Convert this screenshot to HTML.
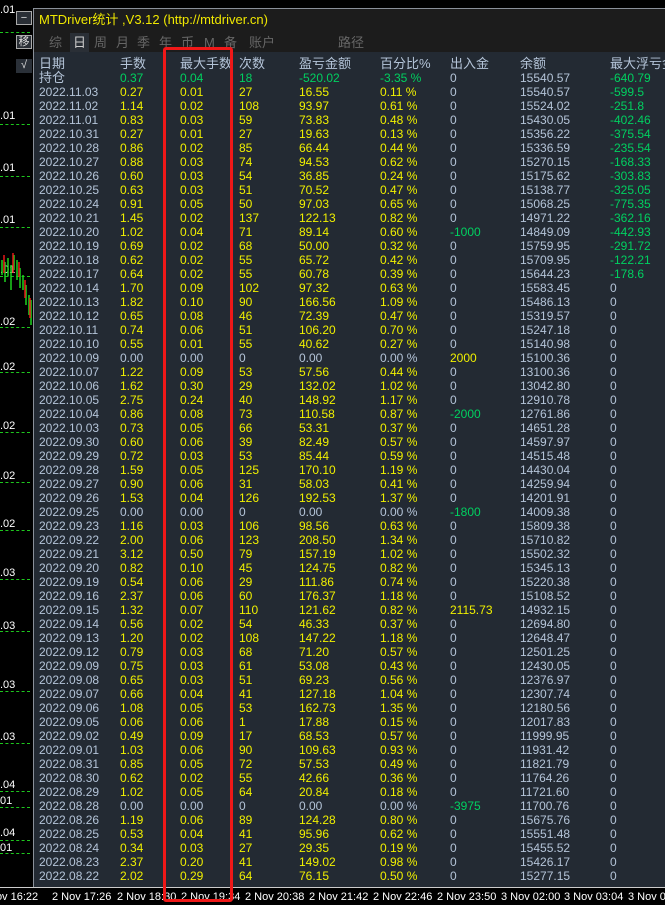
<!DOCTYPE html>
<html><head><meta charset="utf-8"><style>
*{margin:0;padding:0;box-sizing:border-box}
body{width:665px;height:905px;background:#000;position:relative;overflow:hidden;font-family:"Liberation Sans","Noto Sans CJK SC",sans-serif;font-size:12px}
.lb{position:absolute;left:0;color:#fff;font-size:11px;line-height:12px}
.dl{position:absolute;left:0;width:30px;height:1px;border-top:1px dashed #1ec81e}
#panel{position:absolute;left:33px;top:8px;width:632px;height:879px;background:#232a33;border-left:1px solid #8a9099;border-top:1px solid #8a9099}
#title{position:absolute;left:0;top:0;width:100%;height:24px;background:#1c1c1c;color:#f0e800;font-size:13px;line-height:22px;padding-left:5px}
#tabs{position:absolute;left:0;top:24px;width:100%;height:19px;background:#1c1c1c;color:#666;font-size:13px;line-height:19px}
#tabs span{position:absolute;top:0}
.r{position:absolute;left:0;width:100%;height:14px;line-height:14px;white-space:nowrap}
.r span{position:absolute;top:0}
.a{left:5px;color:#b4c4d8}.b{left:86px}.c{left:146px}.d{left:205px}.e{left:265px}.f{left:346px}.g{left:416px;color:#b4c4d8}.h{left:486px;color:#b4c4d8}.i{left:576px;color:#b4c4d8}
.y span.b,.y span.c,.y span.d,.y span.e,.y span.f{color:#f0f000}
.z span{color:#b4c4d8!important}
.gr{color:#00d060!important}.yl{color:#f0f000!important}
.hd span{color:#b4c4d8;font-size:13px}
#axis{position:absolute;left:0;top:887px;width:665px;height:18px;background:#000;border-top:1px solid #ccc;color:#fff;font-size:11px}
#axis span{position:absolute;top:3px;white-space:nowrap}
#box{position:absolute;left:163px;top:47px;width:70px;height:855px;border:3px solid #f01818;border-radius:3px}
.btn{position:absolute;left:16px;width:16px;height:14px;border:1px solid #aaa;background:#2a2f36;color:#ddd;font-size:11px;line-height:12px;text-align:center}
</style></head><body>
<div class="lb" style="top:4px">.01</div><div class="dl" style="top:32px"></div>
<div class="lb" style="top:110px">.01</div><div class="dl" style="top:124px"></div>
<div class="lb" style="top:162px">.01</div><div class="dl" style="top:176px"></div>
<div class="lb" style="top:214px">.01</div><div class="dl" style="top:227px"></div>
<div class="lb" style="top:264px">.01</div><div class="dl" style="top:276px"></div>
<div class="lb" style="top:316px">.02</div><div class="dl" style="top:327px"></div>
<div class="lb" style="top:361px">.02</div><div class="dl" style="top:372px"></div>
<div class="lb" style="top:420px">.02</div><div class="dl" style="top:432px"></div>
<div class="lb" style="top:470px">.02</div><div class="dl" style="top:482px"></div>
<div class="lb" style="top:518px">.02</div><div class="dl" style="top:530px"></div>
<div class="lb" style="top:567px">.03</div><div class="dl" style="top:579px"></div>
<div class="lb" style="top:620px">.03</div><div class="dl" style="top:631px"></div>
<div class="lb" style="top:679px">.03</div><div class="dl" style="top:691px"></div>
<div class="lb" style="top:731px">.03</div><div class="dl" style="top:743px"></div>
<div class="lb" style="top:779px">.04</div><div class="dl" style="top:791px"></div>
<div class="lb" style="top:795px">01</div><div class="dl" style="top:807px"></div>
<div class="lb" style="top:827px">.04</div><div class="dl" style="top:840px"></div>
<div class="lb" style="top:842px">01</div><div class="dl" style="top:853px"></div>
<svg style="position:absolute;left:0;top:250px" width="33" height="80"><g stroke-width="1.5">
<path d="M2 10v15M5 12v20M8 8v18M11 15v25M14 5v15M17 10v20M20 18v20M23 25v15M26 35v20M29 45v20M31 50v25" stroke="#1ed21e"/>
<path d="M4 5v18M13 3v20M19 12v15M25 30v18M30 48v20" stroke="#e81818"/></g></svg>
<div class="btn" style="top:11px">−</div>
<div class="btn" style="top:35px">移</div>
<div class="btn" style="top:59px;border:none;background:#2a3038">√</div>

<div id="panel">
<div id="title">MTDriver统计 ,V3.12 (http://mtdriver.cn)</div>
<div id="tabs"><span style="left:15px">综</span><span style="left:36px;color:#ccc;background:#2a2f36;padding:0 3px">日</span><span style="left:60px">周</span><span style="left:82px">月</span><span style="left:103px">季</span><span style="left:125px">年</span><span style="left:147px">币</span><span style="left:170px">M</span><span style="left:190px">备</span><span style="left:215px">账户</span><span style="left:304px">路径</span></div>
<div class="r hd" style="top:48px"><span class="a">日期</span><span class="b">手数</span><span class="c">最大手数</span><span class="d">次数</span><span class="e">盈亏金额</span><span class="f">百分比%</span><span class="g">出入金</span><span class="h">余额</span><span class="i">最大浮亏金</span></div>
<div class="r" style="top:62px"><span class="a" style="font-size:13px">持仓</span><span class="b gr">0.37</span><span class="c gr">0.04</span><span class="d gr">18</span><span class="e gr">-520.02</span><span class="f gr">-3.35 %</span><span class="g">0</span><span class="h">15540.57</span><span class="i gr">-640.79</span></div>
<div class="r y" style="top:76px"><span class="a">2022.11.03</span><span class="b">0.27</span><span class="c">0.01</span><span class="d">27</span><span class="e">16.55</span><span class="f">0.11 %</span><span class="g">0</span><span class="h">15540.57</span><span class="i gr">-599.5</span></div>
<div class="r y" style="top:90px"><span class="a">2022.11.02</span><span class="b">1.14</span><span class="c">0.02</span><span class="d">108</span><span class="e">93.97</span><span class="f">0.61 %</span><span class="g">0</span><span class="h">15524.02</span><span class="i gr">-251.8</span></div>
<div class="r y" style="top:104px"><span class="a">2022.11.01</span><span class="b">0.83</span><span class="c">0.03</span><span class="d">59</span><span class="e">73.83</span><span class="f">0.48 %</span><span class="g">0</span><span class="h">15430.05</span><span class="i gr">-402.46</span></div>
<div class="r y" style="top:118px"><span class="a">2022.10.31</span><span class="b">0.27</span><span class="c">0.01</span><span class="d">27</span><span class="e">19.63</span><span class="f">0.13 %</span><span class="g">0</span><span class="h">15356.22</span><span class="i gr">-375.54</span></div>
<div class="r y" style="top:132px"><span class="a">2022.10.28</span><span class="b">0.86</span><span class="c">0.02</span><span class="d">85</span><span class="e">66.44</span><span class="f">0.44 %</span><span class="g">0</span><span class="h">15336.59</span><span class="i gr">-235.54</span></div>
<div class="r y" style="top:146px"><span class="a">2022.10.27</span><span class="b">0.88</span><span class="c">0.03</span><span class="d">74</span><span class="e">94.53</span><span class="f">0.62 %</span><span class="g">0</span><span class="h">15270.15</span><span class="i gr">-168.33</span></div>
<div class="r y" style="top:160px"><span class="a">2022.10.26</span><span class="b">0.60</span><span class="c">0.03</span><span class="d">54</span><span class="e">36.85</span><span class="f">0.24 %</span><span class="g">0</span><span class="h">15175.62</span><span class="i gr">-303.83</span></div>
<div class="r y" style="top:174px"><span class="a">2022.10.25</span><span class="b">0.63</span><span class="c">0.03</span><span class="d">51</span><span class="e">70.52</span><span class="f">0.47 %</span><span class="g">0</span><span class="h">15138.77</span><span class="i gr">-325.05</span></div>
<div class="r y" style="top:188px"><span class="a">2022.10.24</span><span class="b">0.91</span><span class="c">0.05</span><span class="d">50</span><span class="e">97.03</span><span class="f">0.65 %</span><span class="g">0</span><span class="h">15068.25</span><span class="i gr">-775.35</span></div>
<div class="r y" style="top:202px"><span class="a">2022.10.21</span><span class="b">1.45</span><span class="c">0.02</span><span class="d">137</span><span class="e">122.13</span><span class="f">0.82 %</span><span class="g">0</span><span class="h">14971.22</span><span class="i gr">-362.16</span></div>
<div class="r y" style="top:216px"><span class="a">2022.10.20</span><span class="b">1.02</span><span class="c">0.04</span><span class="d">71</span><span class="e">89.14</span><span class="f">0.60 %</span><span class="g gr">-1000</span><span class="h">14849.09</span><span class="i gr">-442.93</span></div>
<div class="r y" style="top:230px"><span class="a">2022.10.19</span><span class="b">0.69</span><span class="c">0.02</span><span class="d">68</span><span class="e">50.00</span><span class="f">0.32 %</span><span class="g">0</span><span class="h">15759.95</span><span class="i gr">-291.72</span></div>
<div class="r y" style="top:244px"><span class="a">2022.10.18</span><span class="b">0.62</span><span class="c">0.02</span><span class="d">55</span><span class="e">65.72</span><span class="f">0.42 %</span><span class="g">0</span><span class="h">15709.95</span><span class="i gr">-122.21</span></div>
<div class="r y" style="top:258px"><span class="a">2022.10.17</span><span class="b">0.64</span><span class="c">0.02</span><span class="d">55</span><span class="e">60.78</span><span class="f">0.39 %</span><span class="g">0</span><span class="h">15644.23</span><span class="i gr">-178.6</span></div>
<div class="r y" style="top:272px"><span class="a">2022.10.14</span><span class="b">1.70</span><span class="c">0.09</span><span class="d">102</span><span class="e">97.32</span><span class="f">0.63 %</span><span class="g">0</span><span class="h">15583.45</span><span class="i">0</span></div>
<div class="r y" style="top:286px"><span class="a">2022.10.13</span><span class="b">1.82</span><span class="c">0.10</span><span class="d">90</span><span class="e">166.56</span><span class="f">1.09 %</span><span class="g">0</span><span class="h">15486.13</span><span class="i">0</span></div>
<div class="r y" style="top:300px"><span class="a">2022.10.12</span><span class="b">0.65</span><span class="c">0.08</span><span class="d">46</span><span class="e">72.39</span><span class="f">0.47 %</span><span class="g">0</span><span class="h">15319.57</span><span class="i">0</span></div>
<div class="r y" style="top:314px"><span class="a">2022.10.11</span><span class="b">0.74</span><span class="c">0.06</span><span class="d">51</span><span class="e">106.20</span><span class="f">0.70 %</span><span class="g">0</span><span class="h">15247.18</span><span class="i">0</span></div>
<div class="r y" style="top:328px"><span class="a">2022.10.10</span><span class="b">0.55</span><span class="c">0.01</span><span class="d">55</span><span class="e">40.62</span><span class="f">0.27 %</span><span class="g">0</span><span class="h">15140.98</span><span class="i">0</span></div>
<div class="r z" style="top:342px"><span class="a">2022.10.09</span><span class="b">0.00</span><span class="c">0.00</span><span class="d">0</span><span class="e">0.00</span><span class="f">0.00 %</span><span class="g" style="color:#f0f000!important">2000</span><span class="h">15100.36</span><span class="i">0</span></div>
<div class="r y" style="top:356px"><span class="a">2022.10.07</span><span class="b">1.22</span><span class="c">0.09</span><span class="d">53</span><span class="e">57.56</span><span class="f">0.44 %</span><span class="g">0</span><span class="h">13100.36</span><span class="i">0</span></div>
<div class="r y" style="top:370px"><span class="a">2022.10.06</span><span class="b">1.62</span><span class="c">0.30</span><span class="d">29</span><span class="e">132.02</span><span class="f">1.02 %</span><span class="g">0</span><span class="h">13042.80</span><span class="i">0</span></div>
<div class="r y" style="top:384px"><span class="a">2022.10.05</span><span class="b">2.75</span><span class="c">0.24</span><span class="d">40</span><span class="e">148.92</span><span class="f">1.17 %</span><span class="g">0</span><span class="h">12910.78</span><span class="i">0</span></div>
<div class="r y" style="top:398px"><span class="a">2022.10.04</span><span class="b">0.86</span><span class="c">0.08</span><span class="d">73</span><span class="e">110.58</span><span class="f">0.87 %</span><span class="g gr">-2000</span><span class="h">12761.86</span><span class="i">0</span></div>
<div class="r y" style="top:412px"><span class="a">2022.10.03</span><span class="b">0.73</span><span class="c">0.05</span><span class="d">66</span><span class="e">53.31</span><span class="f">0.37 %</span><span class="g">0</span><span class="h">14651.28</span><span class="i">0</span></div>
<div class="r y" style="top:426px"><span class="a">2022.09.30</span><span class="b">0.60</span><span class="c">0.06</span><span class="d">39</span><span class="e">82.49</span><span class="f">0.57 %</span><span class="g">0</span><span class="h">14597.97</span><span class="i">0</span></div>
<div class="r y" style="top:440px"><span class="a">2022.09.29</span><span class="b">0.72</span><span class="c">0.03</span><span class="d">53</span><span class="e">85.44</span><span class="f">0.59 %</span><span class="g">0</span><span class="h">14515.48</span><span class="i">0</span></div>
<div class="r y" style="top:454px"><span class="a">2022.09.28</span><span class="b">1.59</span><span class="c">0.05</span><span class="d">125</span><span class="e">170.10</span><span class="f">1.19 %</span><span class="g">0</span><span class="h">14430.04</span><span class="i">0</span></div>
<div class="r y" style="top:468px"><span class="a">2022.09.27</span><span class="b">0.90</span><span class="c">0.06</span><span class="d">31</span><span class="e">58.03</span><span class="f">0.41 %</span><span class="g">0</span><span class="h">14259.94</span><span class="i">0</span></div>
<div class="r y" style="top:482px"><span class="a">2022.09.26</span><span class="b">1.53</span><span class="c">0.04</span><span class="d">126</span><span class="e">192.53</span><span class="f">1.37 %</span><span class="g">0</span><span class="h">14201.91</span><span class="i">0</span></div>
<div class="r z" style="top:496px"><span class="a">2022.09.25</span><span class="b">0.00</span><span class="c">0.00</span><span class="d">0</span><span class="e">0.00</span><span class="f">0.00 %</span><span class="g" style="color:#00d060!important">-1800</span><span class="h">14009.38</span><span class="i">0</span></div>
<div class="r y" style="top:510px"><span class="a">2022.09.23</span><span class="b">1.16</span><span class="c">0.03</span><span class="d">106</span><span class="e">98.56</span><span class="f">0.63 %</span><span class="g">0</span><span class="h">15809.38</span><span class="i">0</span></div>
<div class="r y" style="top:524px"><span class="a">2022.09.22</span><span class="b">2.00</span><span class="c">0.06</span><span class="d">123</span><span class="e">208.50</span><span class="f">1.34 %</span><span class="g">0</span><span class="h">15710.82</span><span class="i">0</span></div>
<div class="r y" style="top:538px"><span class="a">2022.09.21</span><span class="b">3.12</span><span class="c">0.50</span><span class="d">79</span><span class="e">157.19</span><span class="f">1.02 %</span><span class="g">0</span><span class="h">15502.32</span><span class="i">0</span></div>
<div class="r y" style="top:552px"><span class="a">2022.09.20</span><span class="b">0.82</span><span class="c">0.10</span><span class="d">45</span><span class="e">124.75</span><span class="f">0.82 %</span><span class="g">0</span><span class="h">15345.13</span><span class="i">0</span></div>
<div class="r y" style="top:566px"><span class="a">2022.09.19</span><span class="b">0.54</span><span class="c">0.06</span><span class="d">29</span><span class="e">111.86</span><span class="f">0.74 %</span><span class="g">0</span><span class="h">15220.38</span><span class="i">0</span></div>
<div class="r y" style="top:580px"><span class="a">2022.09.16</span><span class="b">2.37</span><span class="c">0.06</span><span class="d">60</span><span class="e">176.37</span><span class="f">1.18 %</span><span class="g">0</span><span class="h">15108.52</span><span class="i">0</span></div>
<div class="r y" style="top:594px"><span class="a">2022.09.15</span><span class="b">1.32</span><span class="c">0.07</span><span class="d">110</span><span class="e">121.62</span><span class="f">0.82 %</span><span class="g yl">2115.73</span><span class="h">14932.15</span><span class="i">0</span></div>
<div class="r y" style="top:608px"><span class="a">2022.09.14</span><span class="b">0.56</span><span class="c">0.02</span><span class="d">54</span><span class="e">46.33</span><span class="f">0.37 %</span><span class="g">0</span><span class="h">12694.80</span><span class="i">0</span></div>
<div class="r y" style="top:622px"><span class="a">2022.09.13</span><span class="b">1.20</span><span class="c">0.02</span><span class="d">108</span><span class="e">147.22</span><span class="f">1.18 %</span><span class="g">0</span><span class="h">12648.47</span><span class="i">0</span></div>
<div class="r y" style="top:636px"><span class="a">2022.09.12</span><span class="b">0.79</span><span class="c">0.03</span><span class="d">68</span><span class="e">71.20</span><span class="f">0.57 %</span><span class="g">0</span><span class="h">12501.25</span><span class="i">0</span></div>
<div class="r y" style="top:650px"><span class="a">2022.09.09</span><span class="b">0.75</span><span class="c">0.03</span><span class="d">61</span><span class="e">53.08</span><span class="f">0.43 %</span><span class="g">0</span><span class="h">12430.05</span><span class="i">0</span></div>
<div class="r y" style="top:664px"><span class="a">2022.09.08</span><span class="b">0.65</span><span class="c">0.03</span><span class="d">51</span><span class="e">69.23</span><span class="f">0.56 %</span><span class="g">0</span><span class="h">12376.97</span><span class="i">0</span></div>
<div class="r y" style="top:678px"><span class="a">2022.09.07</span><span class="b">0.66</span><span class="c">0.04</span><span class="d">41</span><span class="e">127.18</span><span class="f">1.04 %</span><span class="g">0</span><span class="h">12307.74</span><span class="i">0</span></div>
<div class="r y" style="top:692px"><span class="a">2022.09.06</span><span class="b">1.08</span><span class="c">0.05</span><span class="d">53</span><span class="e">162.73</span><span class="f">1.35 %</span><span class="g">0</span><span class="h">12180.56</span><span class="i">0</span></div>
<div class="r y" style="top:706px"><span class="a">2022.09.05</span><span class="b">0.06</span><span class="c">0.06</span><span class="d">1</span><span class="e">17.88</span><span class="f">0.15 %</span><span class="g">0</span><span class="h">12017.83</span><span class="i">0</span></div>
<div class="r y" style="top:720px"><span class="a">2022.09.02</span><span class="b">0.49</span><span class="c">0.09</span><span class="d">17</span><span class="e">68.53</span><span class="f">0.57 %</span><span class="g">0</span><span class="h">11999.95</span><span class="i">0</span></div>
<div class="r y" style="top:734px"><span class="a">2022.09.01</span><span class="b">1.03</span><span class="c">0.06</span><span class="d">90</span><span class="e">109.63</span><span class="f">0.93 %</span><span class="g">0</span><span class="h">11931.42</span><span class="i">0</span></div>
<div class="r y" style="top:748px"><span class="a">2022.08.31</span><span class="b">0.85</span><span class="c">0.05</span><span class="d">72</span><span class="e">57.53</span><span class="f">0.49 %</span><span class="g">0</span><span class="h">11821.79</span><span class="i">0</span></div>
<div class="r y" style="top:762px"><span class="a">2022.08.30</span><span class="b">0.62</span><span class="c">0.02</span><span class="d">55</span><span class="e">42.66</span><span class="f">0.36 %</span><span class="g">0</span><span class="h">11764.26</span><span class="i">0</span></div>
<div class="r y" style="top:776px"><span class="a">2022.08.29</span><span class="b">1.02</span><span class="c">0.05</span><span class="d">64</span><span class="e">20.84</span><span class="f">0.18 %</span><span class="g">0</span><span class="h">11721.60</span><span class="i">0</span></div>
<div class="r z" style="top:790px"><span class="a">2022.08.28</span><span class="b">0.00</span><span class="c">0.00</span><span class="d">0</span><span class="e">0.00</span><span class="f">0.00 %</span><span class="g" style="color:#00d060!important">-3975</span><span class="h">11700.76</span><span class="i">0</span></div>
<div class="r y" style="top:804px"><span class="a">2022.08.26</span><span class="b">1.19</span><span class="c">0.06</span><span class="d">89</span><span class="e">124.28</span><span class="f">0.80 %</span><span class="g">0</span><span class="h">15675.76</span><span class="i">0</span></div>
<div class="r y" style="top:818px"><span class="a">2022.08.25</span><span class="b">0.53</span><span class="c">0.04</span><span class="d">41</span><span class="e">95.96</span><span class="f">0.62 %</span><span class="g">0</span><span class="h">15551.48</span><span class="i">0</span></div>
<div class="r y" style="top:832px"><span class="a">2022.08.24</span><span class="b">0.34</span><span class="c">0.03</span><span class="d">27</span><span class="e">29.35</span><span class="f">0.19 %</span><span class="g">0</span><span class="h">15455.52</span><span class="i">0</span></div>
<div class="r y" style="top:846px"><span class="a">2022.08.23</span><span class="b">2.37</span><span class="c">0.20</span><span class="d">41</span><span class="e">149.02</span><span class="f">0.98 %</span><span class="g">0</span><span class="h">15426.17</span><span class="i">0</span></div>
<div class="r y" style="top:860px"><span class="a">2022.08.22</span><span class="b">2.02</span><span class="c">0.29</span><span class="d">64</span><span class="e">76.15</span><span class="f">0.50 %</span><span class="g">0</span><span class="h">15277.15</span><span class="i">0</span></div>
</div>
<div id="axis"><span style="left:-12px">Nov 16:22</span><span style="left:52px">2 Nov 17:26</span><span style="left:117px">2 Nov 18:30</span><span style="left:181px">2 Nov 19:34</span><span style="left:245px">2 Nov 20:38</span><span style="left:309px">2 Nov 21:42</span><span style="left:373px">2 Nov 22:46</span><span style="left:437px">2 Nov 23:50</span><span style="left:501px">3 Nov 02:00</span><span style="left:564px">3 Nov 03:04</span><span style="left:628px">3 Nov 04</span></div>
<div id="box"></div>
</body></html>
